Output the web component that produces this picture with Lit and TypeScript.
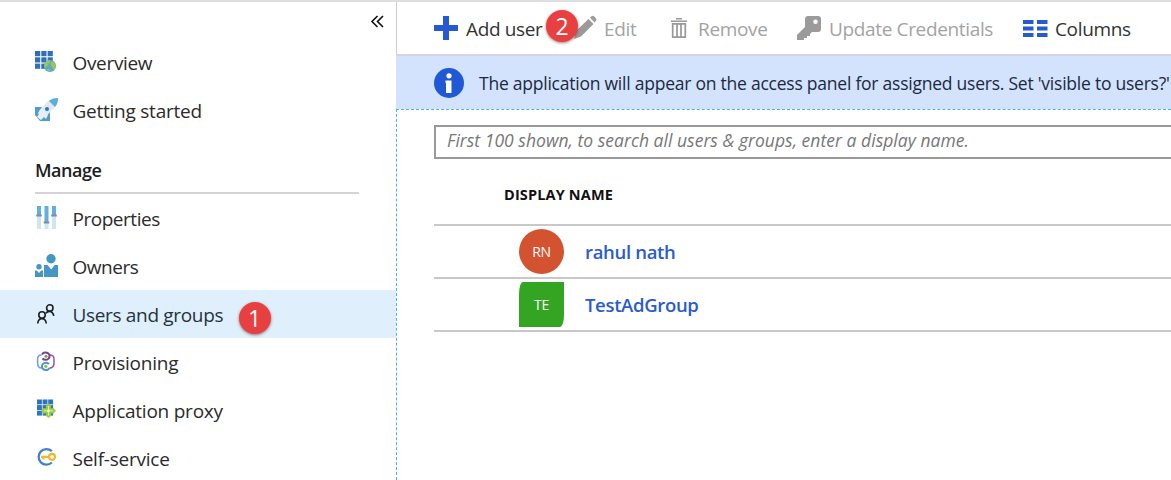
import { LitElement, html, svg, css } from "lit";
import { customElement } from "lit/decorators.js";

const grid = (s: number, g: number, c: string) =>
  [0, 1, 2].map((r) =>
    [0, 1, 2].map(
      (k) => svg`<rect x=${k * (s + g)} y=${r * (s + g)} width=${s} height=${s} fill=${c}/>`
    )
  );

const icons = {
  overview: svg`<g transform="translate(0,1)">${grid(5.2, 1.1, "#2f6fbd")}</g>
    <circle cx="15" cy="16" r="6" fill="#5aa9cf"/>
    <path d="M10 13c1-2 3-3 5-3 1 1 0 2-1 3s0 2-2 3-2 3-2 2c-1-1-1-3 0-5zM16 12c2-1 3 0 4 2s1 4-1 6c-1 0-1-2-2-3s-2-3-1-5zM12 19c1 0 3 0 3 2-1 1-3 0-3-2z" fill="#9bc94a"/>`,
  rocket: svg`<path d="M0 9h7l-4 6 4 4 3-2 5 6H5l-5-6z" fill="#4f9fca"/><path d="M15 14v9h-9l5-5z" fill="#4f9fca"/>
    <path d="M23 0c0 4-1 7-4 10l-7 7-6-6 6-7c3-3 7-4 11-4z" fill="#dfe9f1"/>
    <path d="M23 0c-4 0-7 1-9 3l6 6c2-2 3-5 3-9z" fill="#5aaedb"/>
    <path d="M4 13l3-2 6 6-2 4-2-2-3 3-4-3 2-3z" fill="#e8eef2"/>
    <circle cx="12" cy="11" r="2" fill="#2f76b5"/>`,
  properties: svg`${[
    [2, 9],
    [9.5, 16],
    [17, 9],
  ].map(
    ([x, y]) => svg`<rect x=${x} y="0" width="4" height=${y} fill="#5fb0dc"/>
      <rect x=${x} y=${y} width="4" height=${23 - y} fill="#cfe5f0"/>
      <rect x=${x - 0.8} y=${y - 0.5} width="5.6" height="2" fill="#7f8e98"/>`
  )}`,
  owners: svg`<g fill="#4596c4"><circle cx="16" cy="4.7" r="4.7"/>
    <path d="M9 11h3.600l3.600 4.400L19.600 11H23v12H9z"/><circle cx="4" cy="12.800" r="2.700"/>
    <path d="M0 16.500h1.800L4 19l2.200-2.500H8V23H0z"/></g>`,
  users: svg`<g transform="translate(0,1)" fill="none" stroke="#1b1f24" stroke-width="1.600">
    <circle cx="14.800" cy="5" r="3.200"/><path d="M10.800 10.300c2.500-3.200 7-2.500 8 2.500"/>
    <circle cx="7" cy="12" r="3.200"/><path d="M2.700 20.500c.7-6.500 7.800-6.500 8.600 0"/></g>`,
  provisioning: svg`<g transform="translate(0,1)"><g fill="none" stroke-width="1.500">
    <path d="M6.500 4C3 4 2.600 6 2.600 8v4c0 3 1.500 5 4 5" stroke="#6f9edb"/>
    <path d="M14.500 4C18 4 19 6 19 8v4c0 3-1.500 5-4.500 5" stroke="#8b5aa8"/>
    <path d="M7 3.500a4 3.700 0 1 1 .5 4" stroke="#773f91" stroke-width="2"/>
    <path d="M14.500 17a4 3.700 0 1 1-.5-4" stroke="#4a94d0" stroke-width="2"/></g>
    <circle cx="11" cy="5.300" r="1.500" fill="#7da34a"/><circle cx="10.800" cy="15.300" r="1.600" fill="#8bc33c"/></g>`,
  proxy: svg`<g transform="translate(0,0.500)"><g transform="translate(2,1)">${grid(4.9, 0.7, "#2f74c0")}</g>
    <path d="M13.500 4.700l2.800 2.600-.5 2.500 2.500-.4 2.700 2.900-2.700 2.900-2.500-.4.500 2.500-2.800 2.300-2.800-2.300.5-2.500-2.500.4-2.700-2.900 2.700-2.900 2.500.4-.5-2.500z" fill="#9ccb3c"/>
    <path d="M13.500 7.500v9.500M8.700 12.300h9.600" stroke="#d9eeae" stroke-width="1"/><circle cx="13.500" cy="12.300" r="1.500" fill="#eaf6cf"/></g>`,
  self: svg`<path d="M16.800 5.200A7.800 7.800 0 1 0 16.800 16.500" fill="none" stroke="#4180cf" stroke-width="2.300"/>
    <circle cx="17" cy="10.800" r="3" fill="none" stroke="#efb82f" stroke-width="2.200"/>
    <path d="M14 10.800H6M8.500 10.500v3" fill="none" stroke="#efb82f" stroke-width="2.200"/>`,
};

const icon = (body: unknown, w = 24, h = 24) =>
  html`<svg width=${w} height=${h} viewBox="0 0 ${w} ${h}">${body}</svg>`;

@customElement("side-menu")
class SideMenu extends LitElement {
  static styles = css`
    :host { display: block; width: 396px; flex: none; box-sizing: border-box; }
    svg { display: block; flex: none; overflow: visible; }
    .top { height: 36px; display: flex; justify-content: flex-end; padding: 13px 12px 0 0; box-sizing: border-box; }
    .item { height: 48px; display: flex; align-items: center; gap: 13.500px; padding-left: 35px; color: #2b2b2b; font-size: 19px; white-space: nowrap; }
    .item.selected { background: #dfeffc; color: #26323e; }
    .label { padding-top: 1px; }
    .tight { letter-spacing: -0.47px; }
    .snug { letter-spacing: -0.33px; }
    .soft { letter-spacing: -0.24px; }
    .heading { margin: 12px 37px 0 35px; height: 48px; box-sizing: border-box; border-bottom: 2px solid #d4d4d4; font-size: 18px; font-weight: 600; line-height: 49px; letter-spacing: -0.5px; color: #202020; }
    .badge { position: relative; left: 2px; top: 4px; width: 32px; height: 32px; border-radius: 50%; background: #e84040; color: #fff; display: flex; align-items: center; justify-content: center; font-size: 23px; box-shadow: 0 1px 3px rgba(90, 30, 30, .6); }
  `;
  item(ic: unknown, label: string, fit: string, selected = false) {
    return html`<div class="item ${selected ? "selected" : ""}">
      ${icon(ic)}<span class="label ${fit}">${label}</span>${selected ? html`<span class="badge">1</span>` : ""}
    </div>`;
  }
  render() {
    return html`
      <div class="top">${icon(svg`<path d="M6.500 1L1 6.500 6.500 12M12 1L6.500 6.500 12 12" fill="none" stroke="#111" stroke-width="1.600"/>`, 13, 13)}</div>
      ${this.item(icons.overview, "Overview", "snug")}
      ${this.item(icons.rocket, "Getting started", "soft")}
      <div class="heading">Manage</div>
      ${this.item(icons.properties, "Properties", "tight")}
      ${this.item(icons.owners, "Owners", "tight")}
      ${this.item(icons.users, "Users and groups", "snug", true)}
      ${this.item(icons.provisioning, "Provisioning", "soft")}
      ${this.item(icons.proxy, "Application proxy", "soft")}
      ${this.item(icons.self, "Self-service", "soft")}
    `;
  }
}

@customElement("app-root")
class AppRoot extends LitElement {
  static styles = css`
    :host { display: flex; width: 1171px; height: 480px; box-sizing: border-box; overflow: hidden; border-top: 2px solid #dedede; background: #fff; font-family: "Open Sans", "Noto Sans", sans-serif; }
    svg { display: block; flex: none; overflow: visible; }
    .main { flex: 1; min-width: 0; display: flex; flex-direction: column; white-space: nowrap; }
    .bar { height: 54px; flex: none; box-sizing: border-box; display: flex; align-items: center; border-left: 1px solid #ccc; border-bottom: 2px solid #d3d6dc; padding-left: 37px; font-size: 19px; letter-spacing: -0.35px; color: #333; }
    .off { color: #a3a3a3; }
    .cmd { display: flex; align-items: center; flex: none; }
    .cmd > span:not(.badge) { padding-top: 1px; }
    .add { width: 139px; gap: 8px; position: relative; }
    .edit { width: 98px; gap: 7px; }
    .remove { width: 126px; gap: 11px; }
    .cred { width: 226px; gap: 8px; }
    .cols { gap: 7px; }
    .badge { position: absolute; left: 112px; top: -5px; width: 32px; height: 32px; border-radius: 50%; background: #e84040; color: #fff; display: flex; align-items: center; justify-content: center; font-size: 23px; box-shadow: 0 1px 3px rgba(90, 30, 30, .6); z-index: 1; }
    .info { height: 53px; flex: none; display: flex; align-items: center; gap: 15px; padding-left: 38px; background: #d3e3fe; color: #1b2940; font-size: 17.500px; letter-spacing: -0.235px; }
    .body { flex: 1; border-left: 1px dashed #52b0e0; border-top: 1px dashed #52b0e0; padding: 15px 0 0 37px; }
    .search { height: 34px; box-sizing: border-box; border: 2px solid #999; border-right: 0; padding-left: 11px; line-height: 27px; font-size: 17.500px; letter-spacing: 0.03px; font-style: italic; color: #777; }
    .thead { height: 65px; box-sizing: border-box; padding-left: 70px; line-height: 71px; font-size: 14.500px; letter-spacing: 0.15px; font-weight: 700; color: #111; }
    .row { height: 53px; box-sizing: border-box; border-top: 2px solid #c8c8c8; display: flex; align-items: center; gap: 21px; padding-left: 85px; color: #2a5bd0; font-size: 18.500px; letter-spacing: -0.33px; font-weight: 600; }
    .last { height: 2px; background: #c8c8c8; }
    .avatar { width: 45px; height: 45px; display: flex; align-items: center; justify-content: center; color: #fff; font-size: 14px; font-weight: 400; }
    .person { background: #d35230; border-radius: 50%; }
    .group { background: #34a423; border-radius: 4px 0 4px 0 / 12px 0 12px 0; }
  `;
  render() {
    return html`
      <side-menu></side-menu>
      <div class="main">
        <div class="bar">
          <div class="cmd add">${icon(svg`<path d="M9 0h6v9h9v6h-9v9H9v-9H0V9h9z" fill="#255ad2"/>`)}<span>Add user</span><span class="badge">2</span></div>
          <div class="cmd edit off">${icon(svg`<path d="M3 15L15.500 3l5 5L8 20.500 1 23z M17 1.500l1.500-1.300q1.500-1 3 .6l1.400 1.500q1.200 1.500 0 2.800L21.600 6.400z" fill="#9b9b9b"/>`)}<span>Edit</span></div>
          <div class="cmd remove off">${icon(svg`<path d="M0 3.300h16M5 .8h6" stroke="#999" stroke-width="1.600"/><path d="M1.700 5v14.200h12.600V5M1 5.800h14M6 6v13M10 6v13" fill="none" stroke="#999" stroke-width="1.700"/>`, 16, 21)}<span>Remove</span></div>
          <div class="cmd cred off">${icon(svg`<path fill-rule="evenodd" d="M11 0h10q3 0 3 3v10q0 3-3 3h-6l-2 2v2h-3v2H7v2H0v-5l8-8V3q0-3 3-3zM18.500 3.500a2.300 2.300 0 1 0 0 4.600 2.300 2.300 0 0 0 0-4.600z" fill="#9b9b9b"/>`)}<span>Update Credentials</span></div>
          <div class="cmd cols">${icon(svg`<path d="M0 0h10.500v4H0zM14 0h10.500v4H14zM0 6.500h10.500v4H0zM14 6.500h10.500v4H14zM0 13h10.500v4H0zM14 13h10.500v4H14z" fill="#255ad2"/>`, 25, 17)}<span>Columns</span></div>
        </div>
        <div class="info">${icon(svg`<circle cx="15" cy="15" r="15" fill="#1f59d5"/><circle cx="15" cy="7.800" r="2.600" fill="#fff"/><path d="M11.500 12.500h6V25h-5.500v-10h-.5z" fill="#fff"/>`, 30, 30)}<span>The application will appear on the access panel for assigned users. Set 'visible to users?'</span></div>
        <div class="body">
          <div class="search">First 100 shown, to search all users &amp; groups, enter a display name.</div>
          <div class="thead">DISPLAY NAME</div>
          <div class="row"><span class="avatar person">RN</span><span>rahul nath</span></div>
          <div class="row"><span class="avatar group">TE</span><span>TestAdGroup</span></div>
          <div class="last"></div>
        </div>
      </div>
    `;
  }
}
